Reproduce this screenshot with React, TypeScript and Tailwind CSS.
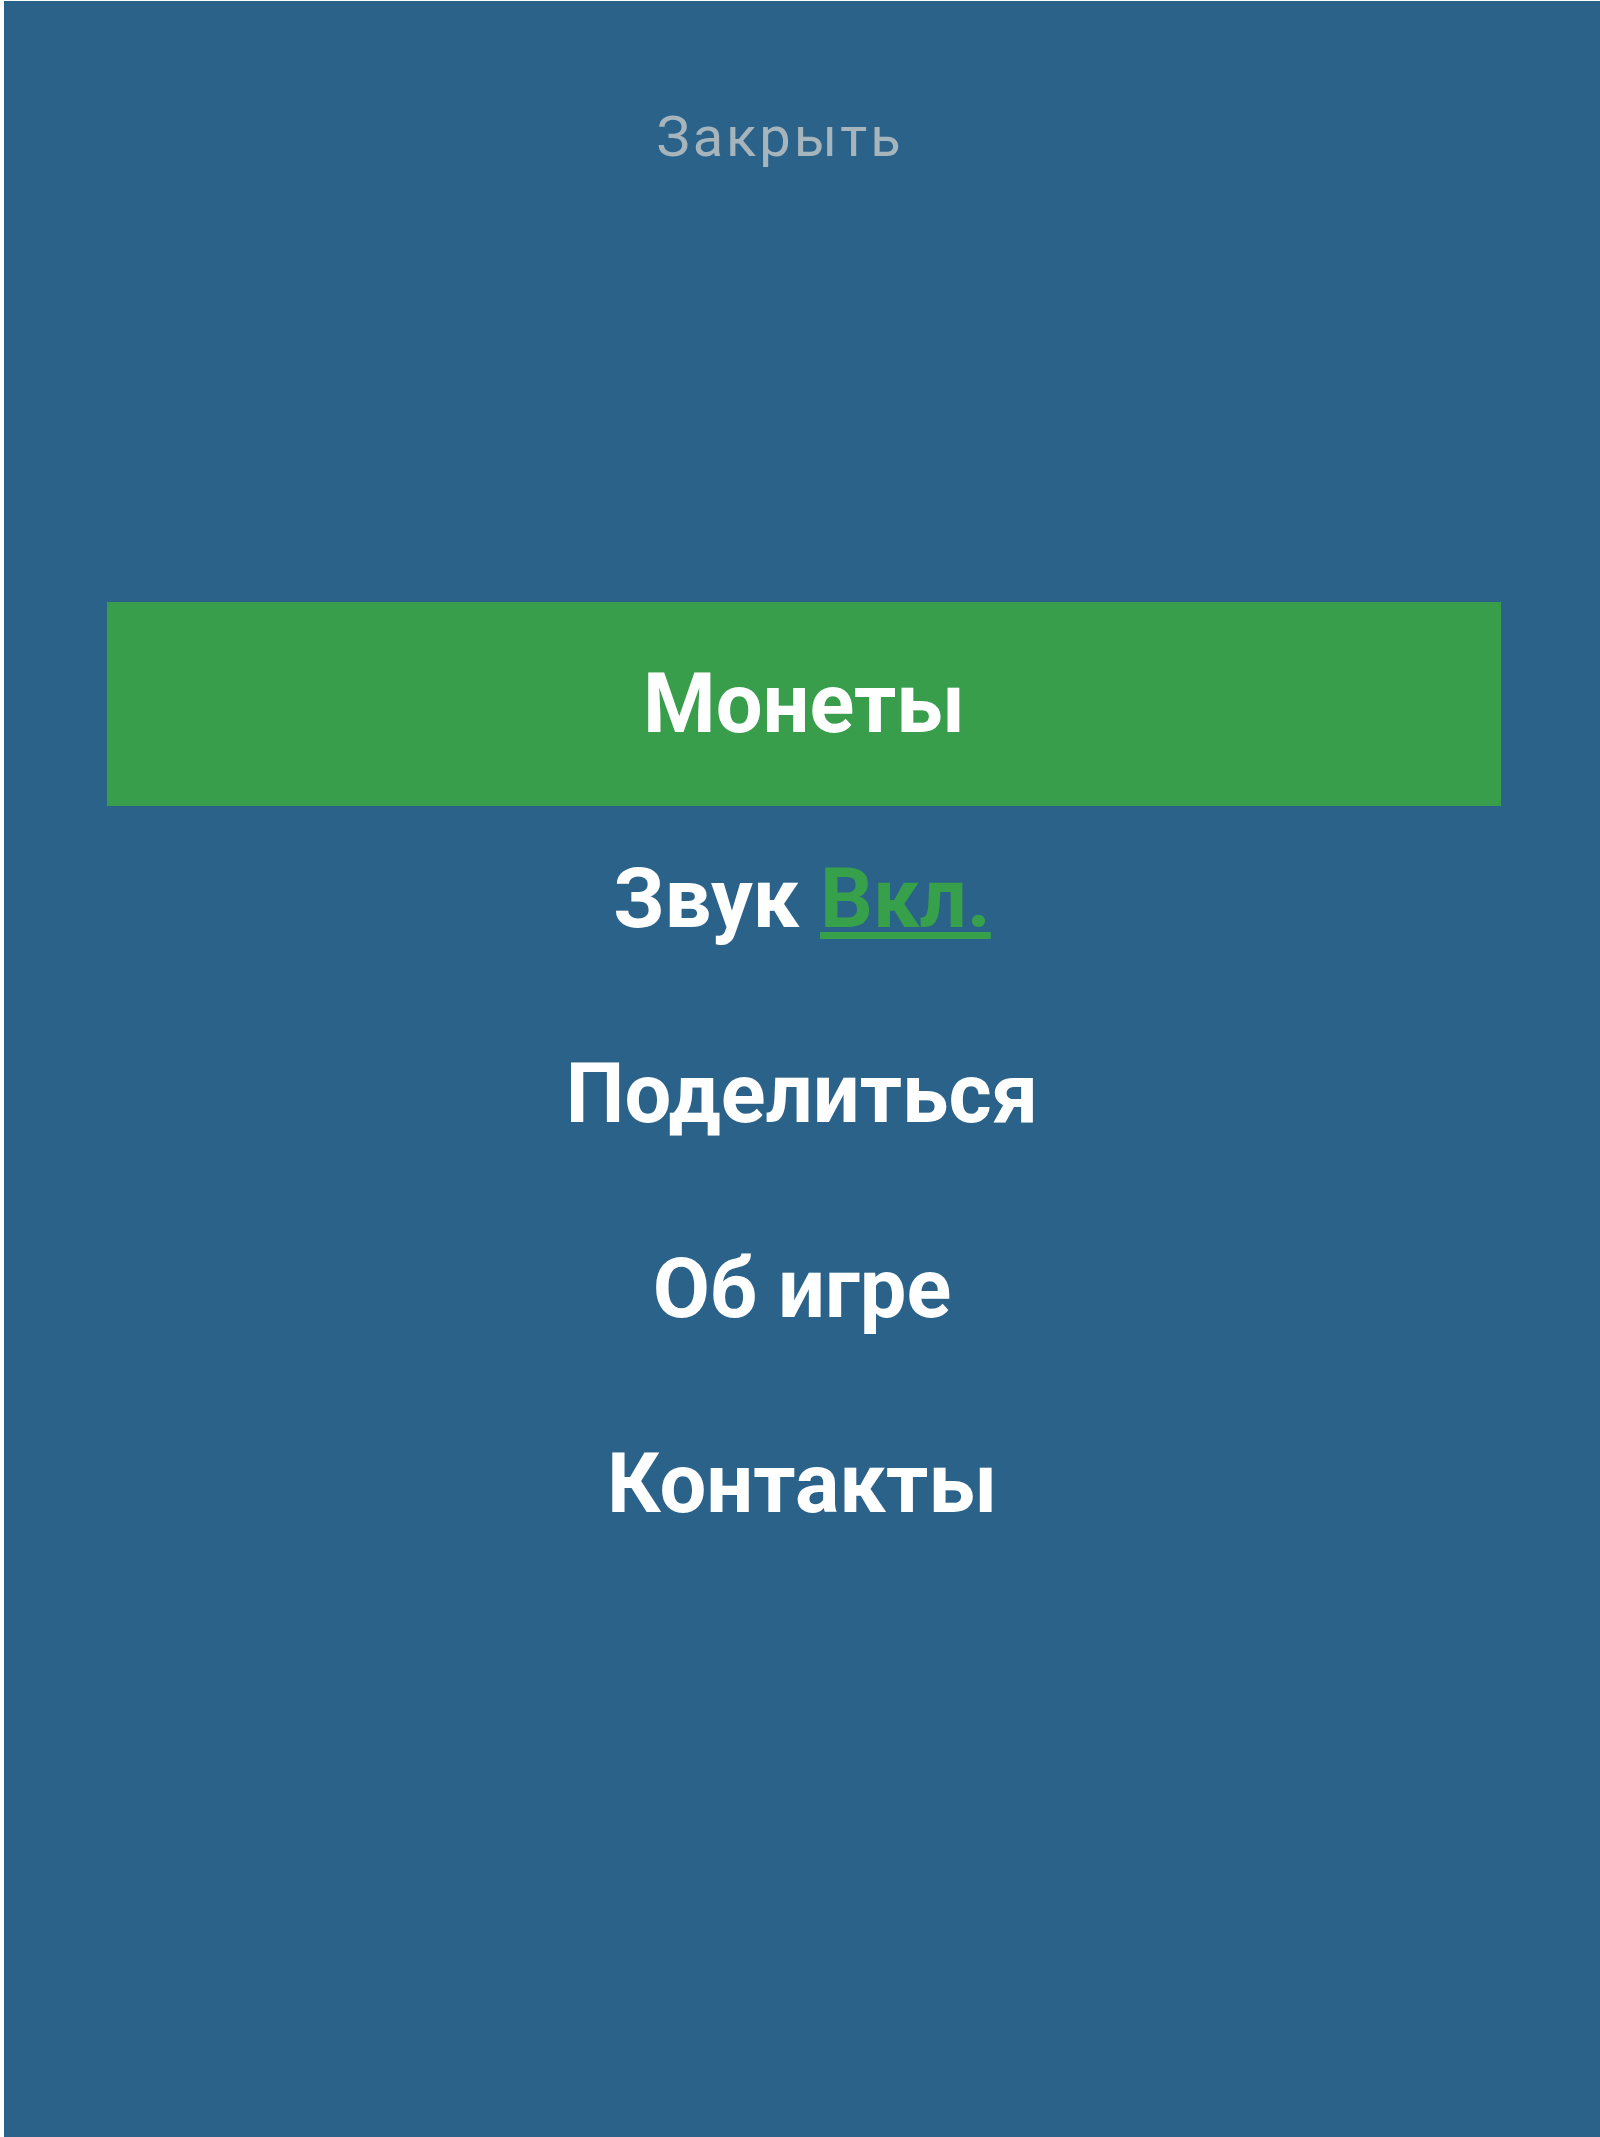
import React from 'react';

const items = ['Поделиться', 'Об игре', 'Контакты'];

export default function App() {
  return (
    <div className="w-full h-[2137px] bg-white pl-[4px] pt-[1px]" style={{ fontFamily: 'Roboto, "Noto Sans", sans-serif' }}>
      <div className="h-full bg-[#2b628a] flex flex-col">
        <div className="pt-[103px] flex justify-center pr-[44px]">
          <button className="text-[56px] leading-[66px] tracking-[3px] text-[#a6b4bc] font-normal">Закрыть</button>
        </div>

        <div className="mt-[432px] ml-[103px] mr-[99px] h-[204px] bg-[#389e4c] flex items-center justify-center">
          <span className="text-[83px] font-bold text-white leading-[98px]">Монеты</span>
        </div>

        <div className="h-[195px] pb-[10px] text-center text-[83px] font-bold leading-[185px] text-white">
          Звук{' '}
          <span className="text-[#37a04b] underline decoration-[7px] underline-offset-[5px]">Вкл.</span>
        </div>

        {items.map((t) => (
          <div key={t} className="h-[195px] pb-[10px] text-center text-[83px] font-bold leading-[185px] text-white">
            {t}
          </div>
        ))}
      </div>
    </div>
  );
}
